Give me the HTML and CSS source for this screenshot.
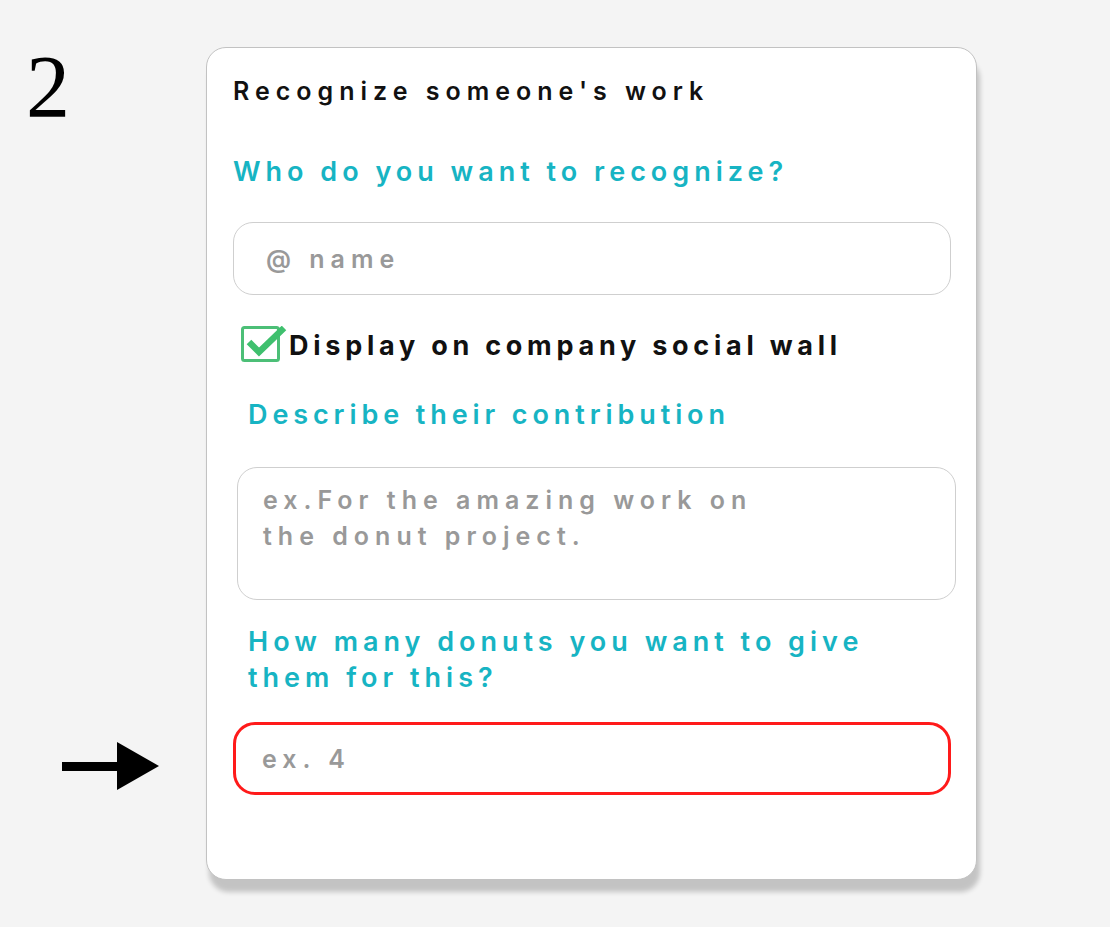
FILE: index.html
```html
<!DOCTYPE html>
<html lang="en">
<head>
<meta charset="utf-8">
<title>Recognize someone's work</title>
<link rel="stylesheet" href="styles.css">
</head>
<body>
<div class="page">
  <div class="gutter">
    <div class="step">2</div>
    <svg class="arrow" width="97" height="50" viewBox="0 0 97 50" aria-hidden="true">
      <rect x="0" y="21" width="57" height="9" fill="#000"/>
      <polygon points="55,1 97,25 55,49" fill="#000"/>
    </svg>
  </div>
  <div class="card">
    <div class="title">Recognize someone's work</div>
    <div class="heading h-who">Who do you want to recognize?</div>
    <div class="field field-name"><span class="ph">@ name</span></div>
    <div class="check-row">
      <svg class="checkbox" width="46" height="37" viewBox="0 0 46 37" aria-hidden="true">
        <rect x="1.5" y="1.5" width="36" height="33" rx="2" fill="none" stroke="#4cbf77" stroke-width="3"/>
        <polyline points="8,16 18,26 43,2" fill="none" stroke="#3fc06e" stroke-width="6.5" stroke-linejoin="miter"/>
      </svg>
      <span class="check-label">Display on company social wall</span>
    </div>
    <div class="heading h-desc">Describe their contribution</div>
    <div class="field area"><span class="ph">ex.For the amazing work on<br>the donut project.</span></div>
    <div class="heading h-many">How many donuts you want to give<br>them for this?</div>
    <div class="field field-num"><span class="ph">ex. 4</span></div>
  </div>
</div>
</body>
</html>
```

FILE: styles.css
```css
html, body {
  margin: 0;
  padding: 0;
}
body {
  background: #f4f4f4;
  font-family: Inter, "Noto Sans", sans-serif;
  width: 1110px;
  height: 927px;
  overflow: hidden;
}
.page {
  display: flex;
  padding-top: 47px;
}
.gutter {
  width: 206px;
  display: flex;
  flex-direction: column;
  padding-bottom: 89px;
  box-sizing: border-box;
}
.step {
  font-family: "Liberation Serif", serif;
  font-size: 88px;
  line-height: 88px;
  margin-top: -4px;
  padding-left: 26px;
  color: #000;
}
.arrow {
  display: block;
  margin-top: auto;
  margin-left: 62px;
}
.card {
  width: 771px;
  height: 833px;
  box-sizing: border-box;
  background: #fff;
  border: 1px solid #c2c2c2;
  border-radius: 20px;
  box-shadow: 3px 12px 5px rgba(0, 0, 0, 0.2);
  padding: 27px 25px 0 26px;
}
.title {
  font-size: 25px;
  line-height: 32px;
  font-weight: 600;
  letter-spacing: 6px;
  color: #111;
  white-space: nowrap;
}
.heading {
  font-size: 27px;
  line-height: 36px;
  font-weight: 600;
  letter-spacing: 5px;
  color: #17b4c3;
  white-space: nowrap;
}
.h-who {
  margin-top: 47px;
}
.field {
  box-sizing: border-box;
  border: 1px solid #cfcfcf;
  border-radius: 20px;
  display: flex;
  align-items: center;
}
.ph {
  font-size: 25px;
  line-height: 36px;
  font-weight: 600;
  letter-spacing: 6px;
  color: #999;
  white-space: nowrap;
}
.field-name {
  margin-top: 32px;
  height: 73px;
  padding-left: 32px;
}
.check-row {
  margin-top: 31px;
  margin-left: 9px;
  height: 36px;
  display: flex;
  align-items: flex-end;
}
.checkbox {
  display: block;
  align-self: flex-start;
  margin-right: 2px;
  margin-left: -1px;
}
.check-label {
  font-size: 27px;
  line-height: 36px;
  font-weight: 700;
  letter-spacing: 4.75px;
  color: #111;
  margin-bottom: -2px;
  white-space: nowrap;
}
.h-desc {
  margin-top: 35px;
  margin-left: 15px;
  letter-spacing: 4.9px;
}
.area {
  margin-top: 34px;
  margin-left: 4px;
  margin-right: -5px;
  height: 133px;
  align-items: flex-start;
  padding: 14px 0 0 25px;
}
.h-many {
  margin-top: 24px;
  margin-left: 15px;
}
.field-num {
  margin-top: 26px;
  height: 73px;
  border: 3px solid #ff1a1a;
  border-radius: 22px;
  padding-left: 26px;
}
```
